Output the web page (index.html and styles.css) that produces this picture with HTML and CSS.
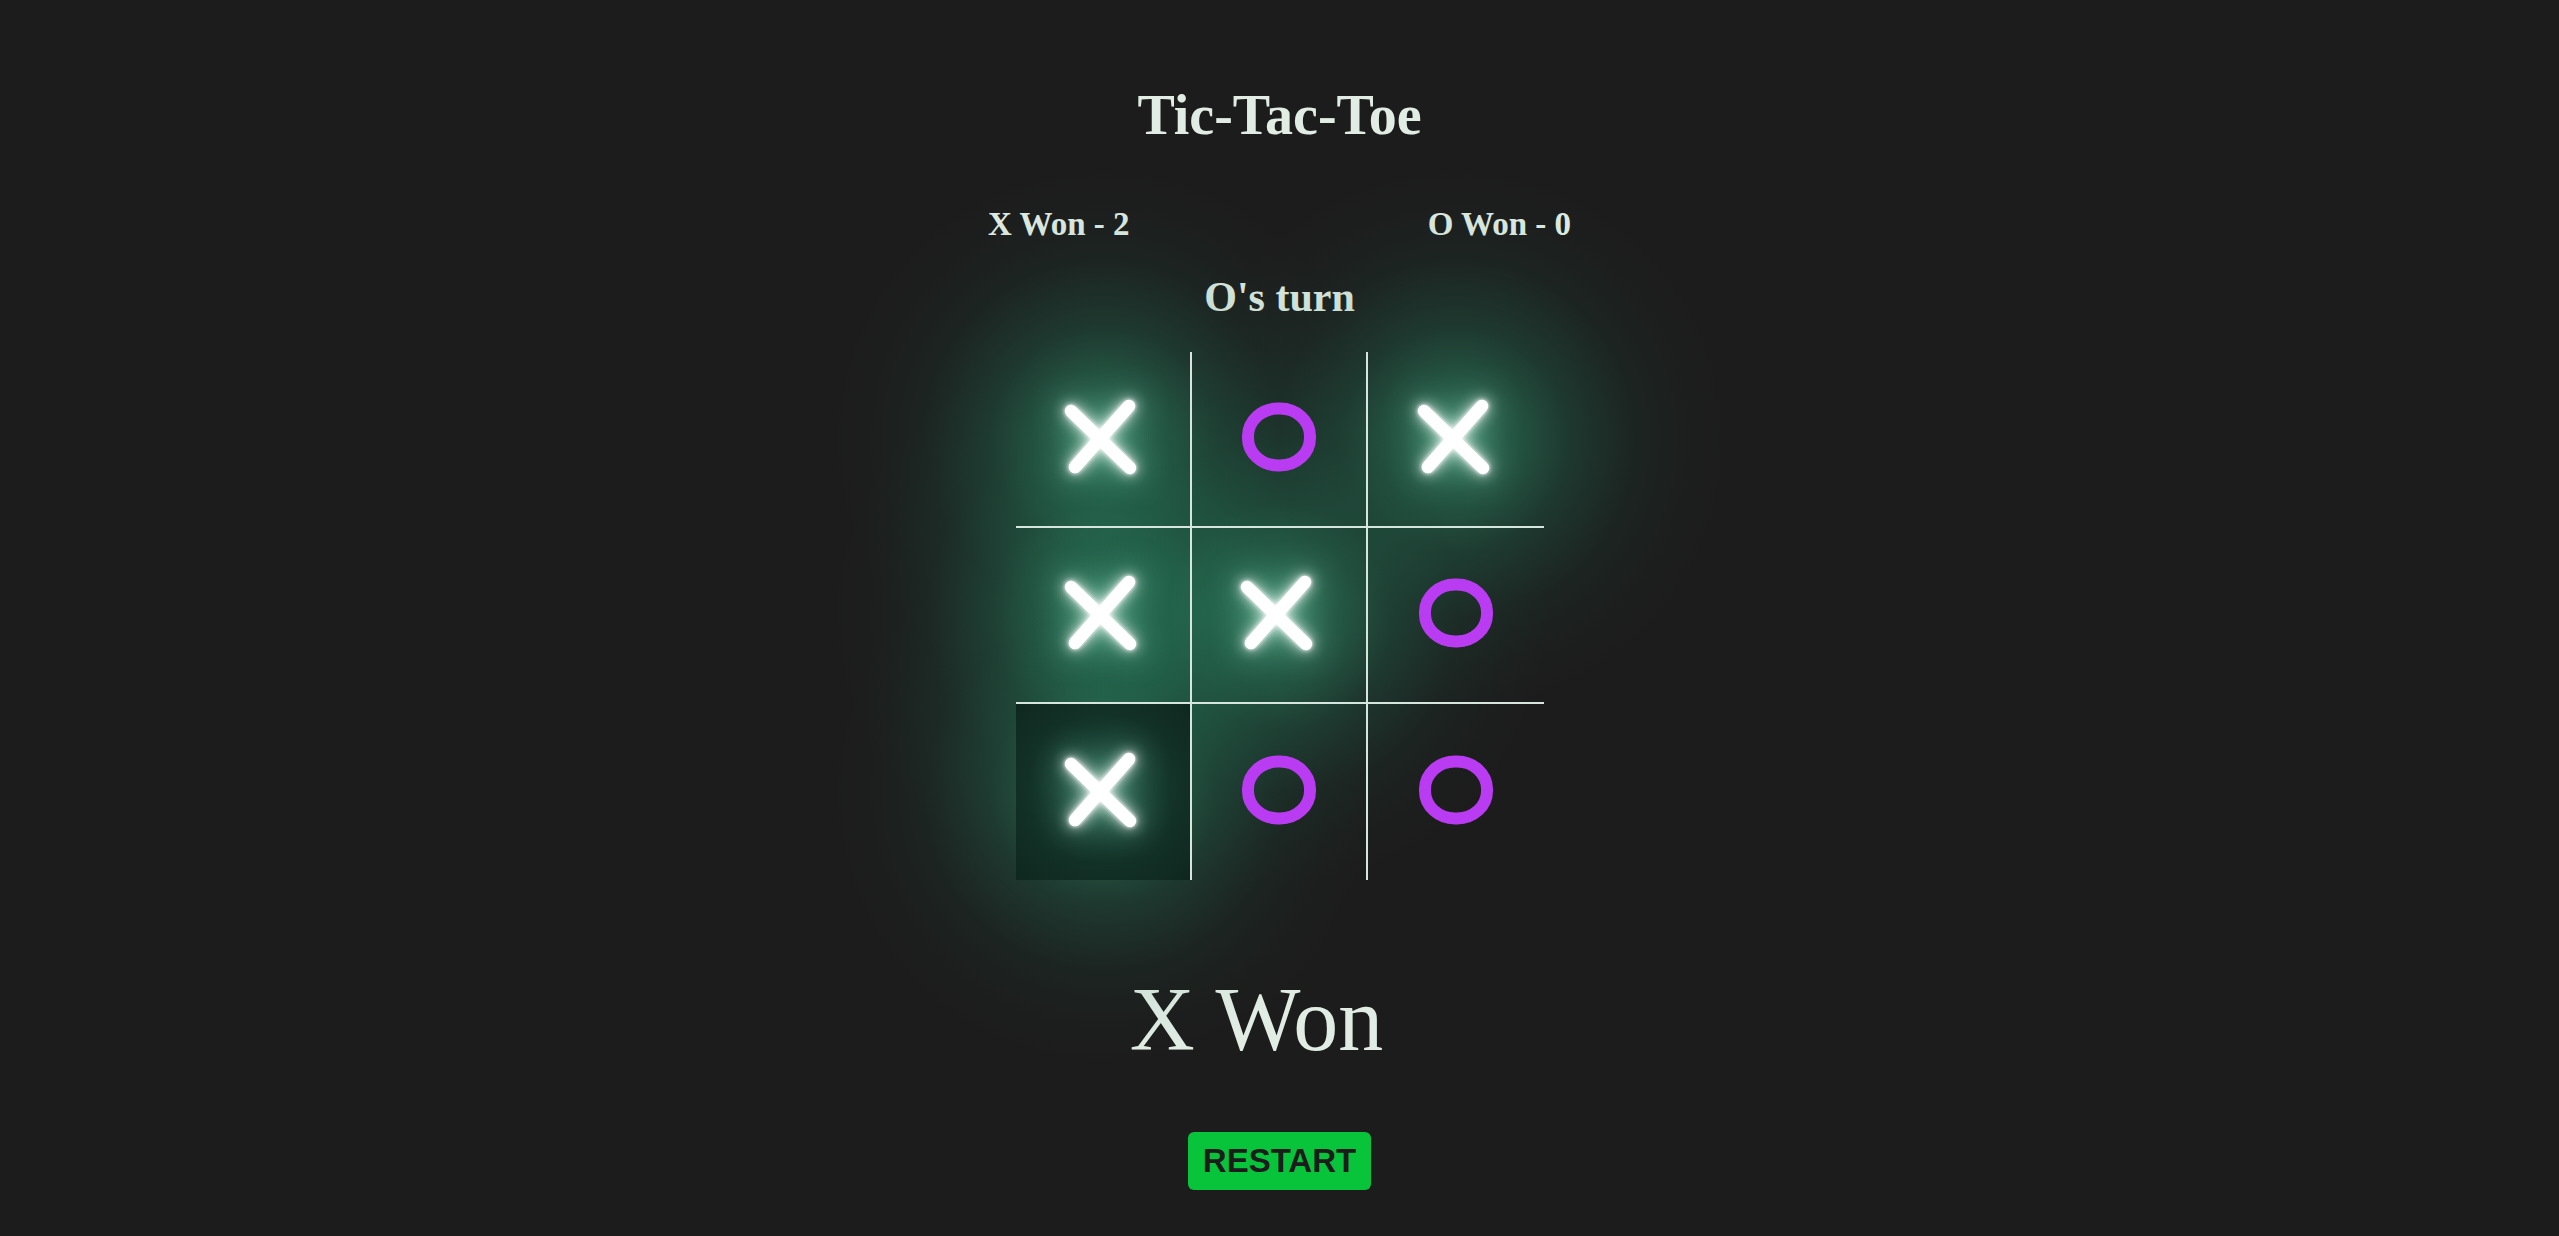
FILE: index.html
```html
<!DOCTYPE html>
<html lang="en">
<head>
<meta charset="utf-8">
<title>Tic-Tac-Toe</title>
<link rel="stylesheet" href="styles.css">
</head>
<body>
<main class="game">
  <h1 class="title">Tic-Tac-Toe</h1>
  <div class="scores">
    <span class="score">X Won - 2</span>
    <span class="score">O Won - 0</span>
  </div>
  <h2 class="turn">O's turn</h2>
  <div class="board">
    <div class="cell x"><svg class="mark-x" viewBox="0 0 80 80" width="80" height="80"><path d="M10 15 L69 72"/><path d="M68 10 L14 71"/></svg></div>
    <div class="cell o"><svg class="mark-o" viewBox="0 0 80 80" width="80" height="80"><rect x="9" y="11.5" width="62" height="57" rx="30" ry="27.5"/></svg></div>
    <div class="cell x"><svg class="mark-x" viewBox="0 0 80 80" width="80" height="80"><path d="M10 15 L69 72"/><path d="M68 10 L14 71"/></svg></div>
    <div class="cell x"><svg class="mark-x" viewBox="0 0 80 80" width="80" height="80"><path d="M10 15 L69 72"/><path d="M68 10 L14 71"/></svg></div>
    <div class="cell x"><svg class="mark-x" viewBox="0 0 80 80" width="80" height="80"><path d="M10 15 L69 72"/><path d="M68 10 L14 71"/></svg></div>
    <div class="cell o"><svg class="mark-o" viewBox="0 0 80 80" width="80" height="80"><rect x="9" y="11.5" width="62" height="57" rx="30" ry="27.5"/></svg></div>
    <div class="cell x active"><svg class="mark-x" viewBox="0 0 80 80" width="80" height="80"><path d="M10 15 L69 72"/><path d="M68 10 L14 71"/></svg></div>
    <div class="cell o"><svg class="mark-o" viewBox="0 0 80 80" width="80" height="80"><rect x="9" y="11.5" width="62" height="57" rx="30" ry="27.5"/></svg></div>
    <div class="cell o"><svg class="mark-o" viewBox="0 0 80 80" width="80" height="80"><rect x="9" y="11.5" width="62" height="57" rx="30" ry="27.5"/></svg></div>
  </div>
  <p class="result">X Won</p>
  <button class="restart" type="button">RESTART</button>
</main>
</body>
</html>
```

FILE: styles.css
```css
html, body {
  margin: 0;
  padding: 0;
  background: #1c1c1c;
}

body {
  font-family: "Liberation Serif", "Times New Roman", serif;
  color: #e0ece4;
  min-height: 1236px;
  overflow: hidden;
}

.game {
  display: flex;
  flex-direction: column;
  align-items: center;
  padding-top: 85px;
}

.title {
  margin: 0;
  font-size: 56px;
  line-height: 61px;
  font-weight: bold;
}

.scores {
  margin-top: 60px;
  width: 583px;
  display: flex;
  justify-content: space-between;
  font-size: 33px;
  line-height: 37px;
  font-weight: bold;
}

.turn {
  margin: 31px 0 0;
  font-size: 42px;
  line-height: 47px;
  font-weight: bold;
}

.board {
  margin-top: 31px;
  display: grid;
  grid-template-columns: repeat(3, 176px);
  grid-auto-rows: 176px;
  position: relative;
  isolation: isolate;
}

.cell {
  position: relative;
  box-sizing: border-box;
  display: flex;
  align-items: center;
  justify-content: center;
}

.cell:nth-child(3n+1),
.cell:nth-child(3n+2) {
  border-right: 2px solid #d6e6de;
}

.cell:nth-child(-n+6) {
  border-bottom: 2px solid #d6e6de;
}

.cell.x::before {
  content: "";
  position: absolute;
  left: 50%;
  top: 50%;
  width: 540px;
  height: 540px;
  margin: -270px 0 0 -270px;
  border-radius: 50%;
  background: radial-gradient(closest-side,
    rgba(52, 160, 120, 0.64) 0,
    rgba(45, 145, 108, 0.48) 22%,
    rgba(35, 125, 92, 0.29) 42%,
    rgba(30, 110, 80, 0.1) 66%,
    rgba(30, 110, 80, 0.03) 85%,
    rgba(30, 110, 80, 0) 100%);
  z-index: -1;
  pointer-events: none;
}

.cell.active {
  background: radial-gradient(circle at 50% 48%,
    #235a47 0,
    #1a4637 30%,
    #133127 60%,
    #0f271e 100%);
}

.mark-x {
  width: 80px;
  height: 80px;
  overflow: visible;
  fill: none;
  stroke: #ffffff;
  stroke-width: 12.5;
  stroke-linecap: round;
  filter: drop-shadow(0 0 2px #ffffff) drop-shadow(0 0 7px rgba(255, 255, 255, 0.85)) drop-shadow(0 0 16px rgba(160, 240, 210, 0.55));
  margin: -6px 0 0 -4px;
}

.mark-o {
  width: 80px;
  height: 80px;
  overflow: visible;
  fill: none;
  stroke: #b93cf2;
  stroke-width: 12;
  margin-top: -5px;
}

.result {
  margin: 90px 0 0;
  padding-right: 46px;
  font-size: 90px;
  line-height: 100px;
  font-weight: normal;
}

.restart {
  margin-top: 62px;
  height: 58px;
  padding: 0 15px;
  border: none;
  border-radius: 6px;
  background: #08c43a;
  color: #1c1c1c;
  font-family: "Liberation Sans", Arial, sans-serif;
  font-weight: bold;
  font-size: 33px;
  line-height: 58px;
}
```
